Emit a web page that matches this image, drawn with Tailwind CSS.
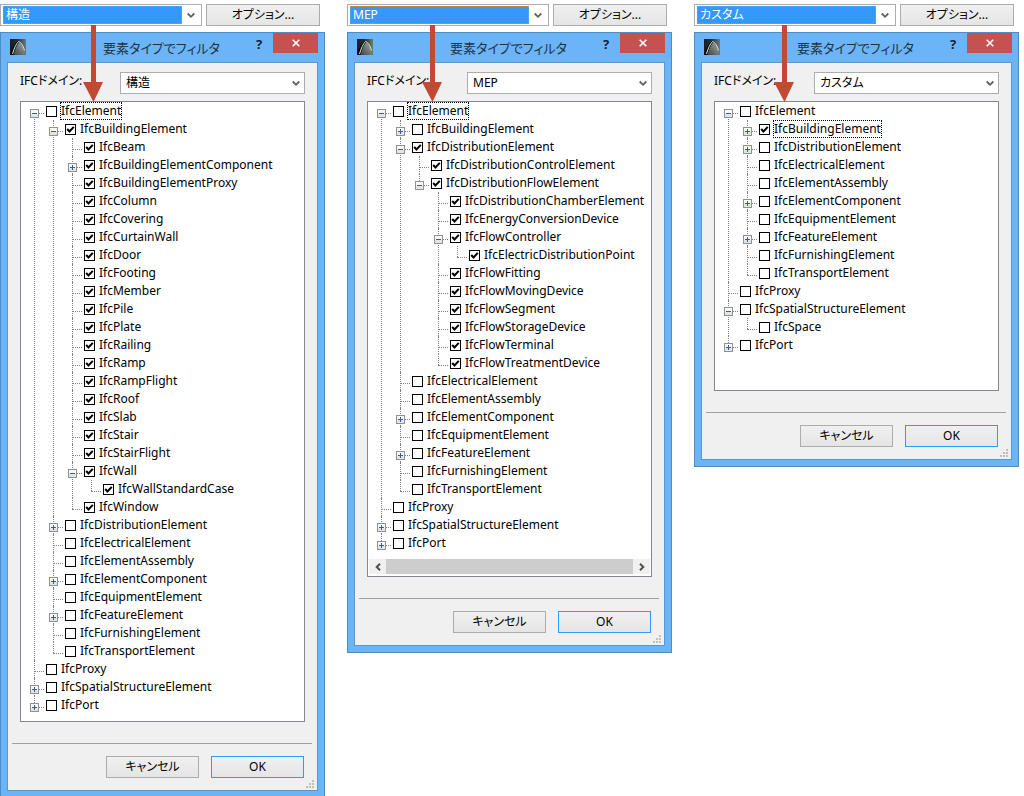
<!DOCTYPE html>
<html lang="ja">

<head>
  <meta charset="UTF-8">
  <meta name="viewport" content="width=device-width, initial-scale=1">
  <title>要素タイプでフィルタ</title>
  <script src="https://cdn.jsdelivr.net/npm/@tailwindcss/browser@4"></script>
</head>

<body class="h-screen overflow-hidden bg-white font-['Noto_Sans','Noto_Sans_CJK_JP',sans-serif] text-[12px] leading-[18px] text-black">
  <main id="columns" class="grid grid-cols-3 items-start gap-[22px] pr-[5px] pt-1"></main>

  <script>
    // Tree lines: two spaces per level, then
    //   +/-  collapsed or expanded branch, "." for a leaf
    //   x    checked, o unchecked
    //   *    item that has the focus
    const structure = `
-o* IfcElement
  -x IfcBuildingElement
    .x IfcBeam
    +x IfcBuildingElementComponent
    .x IfcBuildingElementProxy
    .x IfcColumn
    .x IfcCovering
    .x IfcCurtainWall
    .x IfcDoor
    .x IfcFooting
    .x IfcMember
    .x IfcPile
    .x IfcPlate
    .x IfcRailing
    .x IfcRamp
    .x IfcRampFlight
    .x IfcRoof
    .x IfcSlab
    .x IfcStair
    .x IfcStairFlight
    -x IfcWall
      .x IfcWallStandardCase
    .x IfcWindow
  +o IfcDistributionElement
  .o IfcElectricalElement
  .o IfcElementAssembly
  +o IfcElementComponent
  .o IfcEquipmentElement
  +o IfcFeatureElement
  .o IfcFurnishingElement
  .o IfcTransportElement
.o IfcProxy
+o IfcSpatialStructureElement
+o IfcPort`;

    const mep = `
-o* IfcElement
  +o IfcBuildingElement
  -x IfcDistributionElement
    .x IfcDistributionControlElement
    -x IfcDistributionFlowElement
      .x IfcDistributionChamberElement
      .x IfcEnergyConversionDevice
      -x IfcFlowController
        .x IfcElectricDistributionPoint
      .x IfcFlowFitting
      .x IfcFlowMovingDevice
      .x IfcFlowSegment
      .x IfcFlowStorageDevice
      .x IfcFlowTerminal
      .x IfcFlowTreatmentDevice
  .o IfcElectricalElement
  .o IfcElementAssembly
  +o IfcElementComponent
  .o IfcEquipmentElement
  +o IfcFeatureElement
  .o IfcFurnishingElement
  .o IfcTransportElement
.o IfcProxy
+o IfcSpatialStructureElement
+o IfcPort`;

    const custom = `
-o IfcElement
  +x* IfcBuildingElement
  +o IfcDistributionElement
  .o IfcElectricalElement
  .o IfcElementAssembly
  +o IfcElementComponent
  .o IfcEquipmentElement
  +o IfcFeatureElement
  .o IfcFurnishingElement
  .o IfcTransportElement
.o IfcProxy
-o IfcSpatialStructureElement
  .o IfcSpace
+o IfcPort`;

    const columns = [
      { domain: '構造', tree: structure, arrow: 'left-[83px]' },
      { domain: 'MEP', tree: mep, arrow: 'left-[75px]', scrollbar: true },
      { domain: 'カスタム', tree: custom, arrow: 'left-[80px]' },
    ];

    function parseTree(text) {
      const root = { children: [] };
      const stack = [root];
      text.trim().split('\n').forEach(line => {
        const [, indent, kind, state, focus, name] = line.match(/^( *)([-+.])([xo])(\*?) (.+)$/);
        const level = indent.length / 2;
        const node = { kind, name, checked: state === 'x', focused: focus === '*', children: [] };
        stack[level].children.push(node);
        stack[level + 1] = node;
      });
      return root.children;
    }

    function toggle(node) {
      if (node.kind === '.') return '<span class="w-[9px] shrink-0"></span>';
      return `
        <button type="button" aria-label="${node.name}" class="relative mt-[7px] size-[9px] shrink-0">
          <svg class="size-[9px]" viewBox="0 0 9 9" shape-rendering="crispEdges">
            <rect width="9" height="9" fill="#919191"/>
            <rect x="1" y="1" width="7" height="7" fill="#f8f8f8"/>
            <rect x="1" y="5" width="7" height="3" fill="#e4e4e4"/>
            <rect x="2" y="4" width="5" height="1" fill="#3c5a9c"/>
            ${node.kind === '+' ? '<rect x="4" y="2" width="1" height="5" fill="#3c5a9c"/>' : ''}
          </svg>
        </button>`;
    }

    function renderNodes(nodes, isRoot) {
      return nodes.map((node, i) => {
        const last = i === nodes.length - 1;
        const top = isRoot && i === 0 ? 'top-[11px]' : 'top-0';
        const end = last ? 'h-[11px]' : 'bottom-0';
        return `
          <li class="relative">
            <span class="absolute left-[13px] ${top} ${end} border-l border-dotted border-[#808080]"></span>
            <span class="absolute left-[13px] top-[11px] w-[10px] border-t border-dotted border-[#808080]"></span>
            <div class="flex h-[18px] items-start pl-[9px]">
              ${toggle(node)}
              <label class="ml-[7px] flex shrink-0">
                <span class="relative mt-1 size-[11px]">
                  <input type="checkbox" ${node.checked ? 'checked' : ''} class="peer block size-[11px] appearance-none border border-black bg-white">
                  <svg class="pointer-events-none absolute inset-0 hidden size-[11px] peer-checked:block" viewBox="0 0 11 11">
                    <path d="M2.200 5 4.500 7.500 8.800 2.900" fill="none" stroke="#000" stroke-width="2"/>
                  </svg>
                </span>
                <span class="ml-[3px] h-[18px] whitespace-nowrap border border-dotted leading-[15px] ${node.focused ? 'border-black' : 'border-transparent'}">${node.name}</span>
              </label>
            </div>
            ${node.children.length ? `<ul class="pl-[19px]">${renderNodes(node.children, false)}</ul>` : ''}
          </li>`;
      }).join('');
    }

    const chevron = `
      <svg class="pointer-events-none h-2 w-2" viewBox="0 0 8 8">
        <path d="M.7 2.500 4 5.800 7.300 2.500" fill="none" stroke="#606060" stroke-width="1.800"/>
      </svg>`;

    const options = current => columns
      .map(c => `<option ${c.domain === current ? 'selected' : ''}>${c.domain}</option>`)
      .join('');

    const scrollbar = `
      <div class="mx-px mb-0.5 flex h-[15px] bg-[#f0f0f0]">
        <button type="button" aria-label="左へ" class="flex w-[17px] items-center justify-center">
          <svg class="size-2" viewBox="0 0 8 8"><path d="M6 .7 2.7 4 6 7.3" fill="none" stroke="#505050" stroke-width="2"/></svg>
        </button>
        <div class="flex-1 bg-[#cdcdcd]"></div>
        <button type="button" aria-label="右へ" class="flex w-[17px] items-center justify-center">
          <svg class="size-2" viewBox="0 0 8 8"><path d="M2 .7 5.3 4 2 7.3" fill="none" stroke="#505050" stroke-width="2"/></svg>
        </button>
      </div>`;

    document.getElementById('columns').innerHTML = columns.map((col, i) => `
      <section class="relative">
        <div class="flex gap-1 pr-[5px]">
          <div class="flex h-[22px] flex-1 items-center border border-[#abadb3] bg-white p-0.5">
            <select aria-label="IFCドメイン" class="h-[18px] min-w-0 flex-1 appearance-none border border-dotted border-[#e08a3c] bg-[#3399ff] pl-0.5 leading-4 text-white [font-feature-settings:'palt']">${options(col.domain)}</select>
            <span class="flex w-[17px] justify-end pr-1">${chevron}</span>
          </div>
          <button type="button" class="h-[22px] w-[114px] border border-[#acacac] bg-linear-to-b from-[#f0f0f0] to-[#e5e5e5] leading-5 [font-feature-settings:'palt']">オプション...</button>
        </div>

        <div class="mt-1.5 border border-[#4f8cc0] bg-[#6cb4f8] px-1.5 pb-1.5">
          <header class="relative flex h-[29px] items-start">
            <svg class="ml-[3px] mt-1.5 size-4" viewBox="0 0 16 16">
              <defs>
                <linearGradient id="icon${i}" x1="0" y1="0" x2="1" y2="0">
                  <stop offset="0" stop-color="#1a1c1c"/>
                  <stop offset=".5" stop-color="#2c3434"/>
                  <stop offset="1" stop-color="#6c7c7a"/>
                </linearGradient>
                <linearGradient id="arch${i}" x1="0" y1="1" x2="1" y2="0">
                  <stop offset="0" stop-color="#3a4444"/>
                  <stop offset="1" stop-color="#a4b0ac"/>
                </linearGradient>
              </defs>
              <rect width="16" height="16" fill="url(#icon${i})"/>
              <path d="M3.500 16C4.500 11 6.500 6 9 3c3 2 5 6 6 13z" fill="url(#arch${i})"/>
              <path d="M0 16C1.500 10 4 4 8 2l1.500 1C6.500 6 4.500 11 3.500 16z" fill="#080909"/>
              <path d="M2.500 15C4 9.500 6 5 8.500 2.500c3 1 4.500 4 6 9" fill="none" stroke="#e4e8e4" stroke-width="1"/>
            </svg>
            <h2 class="flex-1 pl-[52px] pt-1.5 text-center text-[13px] leading-[18px] text-[#1d3345] [font-feature-settings:'palt']">要素タイプでフィルタ</h2>
            <button type="button" aria-label="ヘルプ" class="w-7 pt-0.5 text-[13px] font-bold leading-[18px] text-[#16212b]">?</button>
            <button type="button" aria-label="閉じる" class="flex h-5 w-[45px] items-center justify-center bg-[#c75050]">
              <svg class="size-2" viewBox="0 0 8 8"><path d="M.7.7 7.3 7.3M7.3.7.7 7.3" stroke="#fff" stroke-width="1.600"/></svg>
            </button>
          </header>

          <div class="relative border border-[#5a98cc] bg-[#f0f0f0] pb-3 pt-[9px]">
            <div class="mx-3 flex">
              <label for="domain${i}" class="w-[100px] [font-feature-settings:'palt']">IFCドメイン:</label>
              <div class="flex h-[22px] flex-1 items-center border border-[#abadb3] bg-white">
                <select id="domain${i}" class="h-5 min-w-0 flex-1 appearance-none pl-[5px] leading-5 [font-feature-settings:'palt']">${options(col.domain)}</select>
                <span class="flex w-4 justify-end pr-1">${chevron}</span>
              </div>
            </div>

            <div class="mx-3 mt-[7px] min-h-[290px] overflow-hidden border border-[#828790] bg-white">
              <ul class="pb-[7px]">${renderNodes(parseTree(col.tree), true)}</ul>
              ${col.scrollbar ? scrollbar : ''}
            </div>

            <hr class="ml-1 mr-[5px] mt-[21px] border-[#a0a0a0]">

            <div class="mt-3 flex justify-end gap-3 pr-[13px]">
              <button type="button" class="h-[22px] w-[93px] border border-[#acacac] bg-linear-to-b from-[#f0f0f0] to-[#e5e5e5] leading-5 [font-feature-settings:'palt']">キャンセル</button>
              <button type="button" class="h-[22px] w-[93px] border border-[#3399ff] bg-linear-to-b from-[#f0f0f0] to-[#e5e5e5] leading-5">OK</button>
            </div>

            <svg class="absolute bottom-0.5 right-[3px] size-2" viewBox="0 0 8 8" fill="#bfbfbf" shape-rendering="crispEdges">
              <path d="M6 0h2v2H6zM3 3h2v2H3zM6 3h2v2H6zM0 6h2v2H0zM3 6h2v2H3zM6 6h2v2H6z"/>
            </svg>
          </div>
        </div>

        <!-- arrow from the drop-down to the tree -->
        <svg class="pointer-events-none absolute top-[21px] ${col.arrow} h-[77px] w-5" viewBox="0 0 20 77" fill="#c04a32">
          <path d="M8 0h5v57h7L10.500 77 0 57h8z"/>
        </svg>
      </section>`).join('');
  </script>
</body>

</html>
